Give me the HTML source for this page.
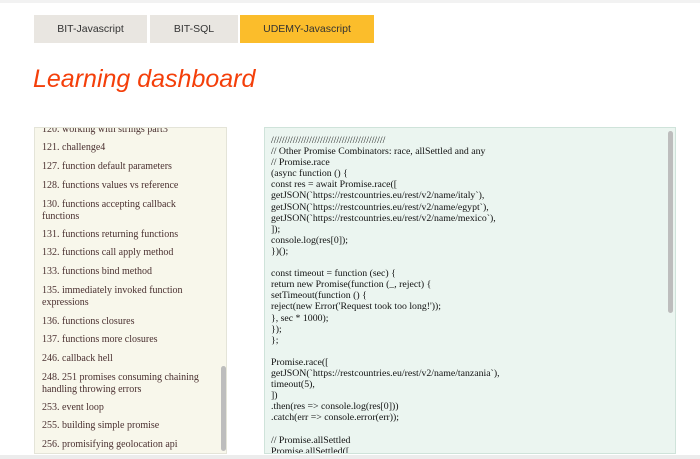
<!DOCTYPE html>
<html><head><style>
body{margin:0;width:700px;height:459px;background:#fff;position:relative;overflow:hidden;font-family:"Liberation Serif",serif}
.tab{position:absolute;top:15px;height:28px;line-height:28px;text-align:center;font-family:"Liberation Sans",sans-serif;font-size:10.5px;color:#333;background:#e9e6e1}
h1{position:absolute;left:33px;top:65px;margin:0;font-family:"Liberation Sans",sans-serif;font-style:italic;font-weight:normal;font-size:25px;color:#f43f0a}
.left{position:absolute;left:34px;top:127px;width:193px;height:327px;background:#f8f7eb;border:1px solid #e4e4d8;box-sizing:border-box;overflow:hidden}
.left div{position:absolute;left:7px;width:170px;font-size:10px;line-height:12px;color:#4a3030}
.right{position:absolute;left:264px;top:127px;width:412px;height:327px;background:#ebf5f0;border:1px solid #cfe3da;box-sizing:border-box;overflow:hidden}
.code{position:absolute;left:6px;top:7px;font-size:9.8px;line-height:11.1px;color:#111;white-space:pre}
.sb{position:absolute;width:5px;border-radius:3px;background:#bdbdbd}
</style></head><body>
<div style="position:absolute;left:0;top:0;width:700px;height:3px;background:#f2f2f2"></div>
<div class="tab" style="left:34px;width:113px">BIT-Javascript</div>
<div class="tab" style="left:150px;width:88px">BIT-SQL</div>
<div class="tab" style="left:240px;width:134px;background:#fbbd2b">UDEMY-Javascript</div>
<h1>Learning dashboard</h1>
<div class="left">
<div style="top:-4px">120. working with strings part3</div>
<div style="top:14px">121. challenge4</div>
<div style="top:33px">127. function default parameters</div>
<div style="top:52px">128. functions values vs reference</div>
<div style="top:71px">130. functions accepting callback functions</div>
<div style="top:101px">131. functions returning functions</div>
<div style="top:119px">132. functions call apply method</div>
<div style="top:138px">133. functions bind method</div>
<div style="top:157px">135. immediately invoked function expressions</div>
<div style="top:188px">136. functions closures</div>
<div style="top:206px">137. functions more closures</div>
<div style="top:225px">246. callback hell</div>
<div style="top:244px">248. 251 promises consuming chaining handling throwing errors</div>
<div style="top:274px">253. event loop</div>
<div style="top:292px">255. building simple promise</div>
<div style="top:311px">256. promisifying geolocation api</div>
<div class="sb" style="left:186px;top:238px;width:5px;height:85px"></div>
</div>
<div class="right">
<div class="code">//////////////////////////////////////////
// Other Promise Combinators: race, allSettled and any
// Promise.race
(async function () {
const res = await Promise.race([
getJSON(`https://restcountries.eu/rest/v2/name/italy`),
getJSON(`https://restcountries.eu/rest/v2/name/egypt`),
getJSON(`https://restcountries.eu/rest/v2/name/mexico`),
]);
console.log(res[0]);
})();

const timeout = function (sec) {
return new Promise(function (_, reject) {
setTimeout(function () {
reject(new Error('Request took too long!'));
}, sec * 1000);
});
};

Promise.race([
getJSON(`https://restcountries.eu/rest/v2/name/tanzania`),
timeout(5),
])
.then(res =&gt; console.log(res[0]))
.catch(err =&gt; console.error(err));

// Promise.allSettled
Promise.allSettled([</div>
<div class="sb" style="left:403px;top:3px;height:182px"></div>
</div>
<div style="position:absolute;left:0;top:455px;width:700px;height:4px;background:#ececec"></div>
</body></html>
